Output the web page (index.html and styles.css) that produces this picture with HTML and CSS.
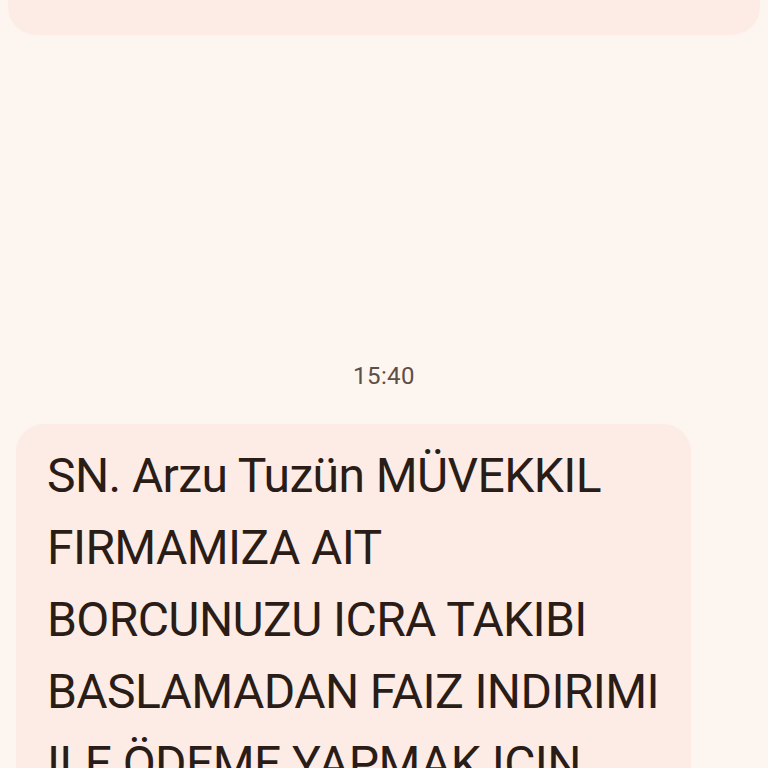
FILE: index.html
```html
<!DOCTYPE html>
<html lang="tr">
<head>
<meta charset="utf-8">
<title>Mesajlar</title>
<link rel="stylesheet" href="styles.css">
</head>
<body>
<main class="thread">
  <div class="bubble bubble-prev"></div>
  <div class="timestamp">15:40</div>
  <div class="bubble bubble-msg">
    <p class="msg-text">SN. Arzu Tuzün MÜVEKKIL<br>FIRMAMIZA AIT<br>BORCUNUZU ICRA TAKIBI<br>BASLAMADAN FAIZ INDIRIMI<br>ILE ÖDEME YAPMAK ICIN</p>
  </div>
</main>
</body>
</html>
```
FILE: styles.css
```css
html, body {
  margin: 0;
  padding: 0;
  background: #fdf5f0;
  height: 768px;
  overflow: hidden;
}
body {
  font-family: Roboto, "Noto Sans", sans-serif;
  color: #2a1c17;
}
.thread {
  display: flex;
  flex-direction: column;
  align-items: flex-start;
}
.bubble {
  background: #fdece5;
  border-radius: 28px;
}
.bubble-prev {
  margin: -100px 8px 0 8px;
  width: 752px;
  height: 135px;
}
.timestamp {
  align-self: stretch;
  text-align: center;
  font-size: 24px;
  line-height: 32px;
  color: #5b4f4a;
  margin-top: 325px;
  letter-spacing: 0.4px;
}
.bubble-msg {
  margin: 32px 0 0 16px;
  width: 675px;
  box-sizing: border-box;
  padding: 16px 20px 60px 31px;
}
.msg-text {
  margin: 0;
  font-size: 48px;
  line-height: 72px;
  letter-spacing: -0.6px;
  white-space: nowrap;
}
```
